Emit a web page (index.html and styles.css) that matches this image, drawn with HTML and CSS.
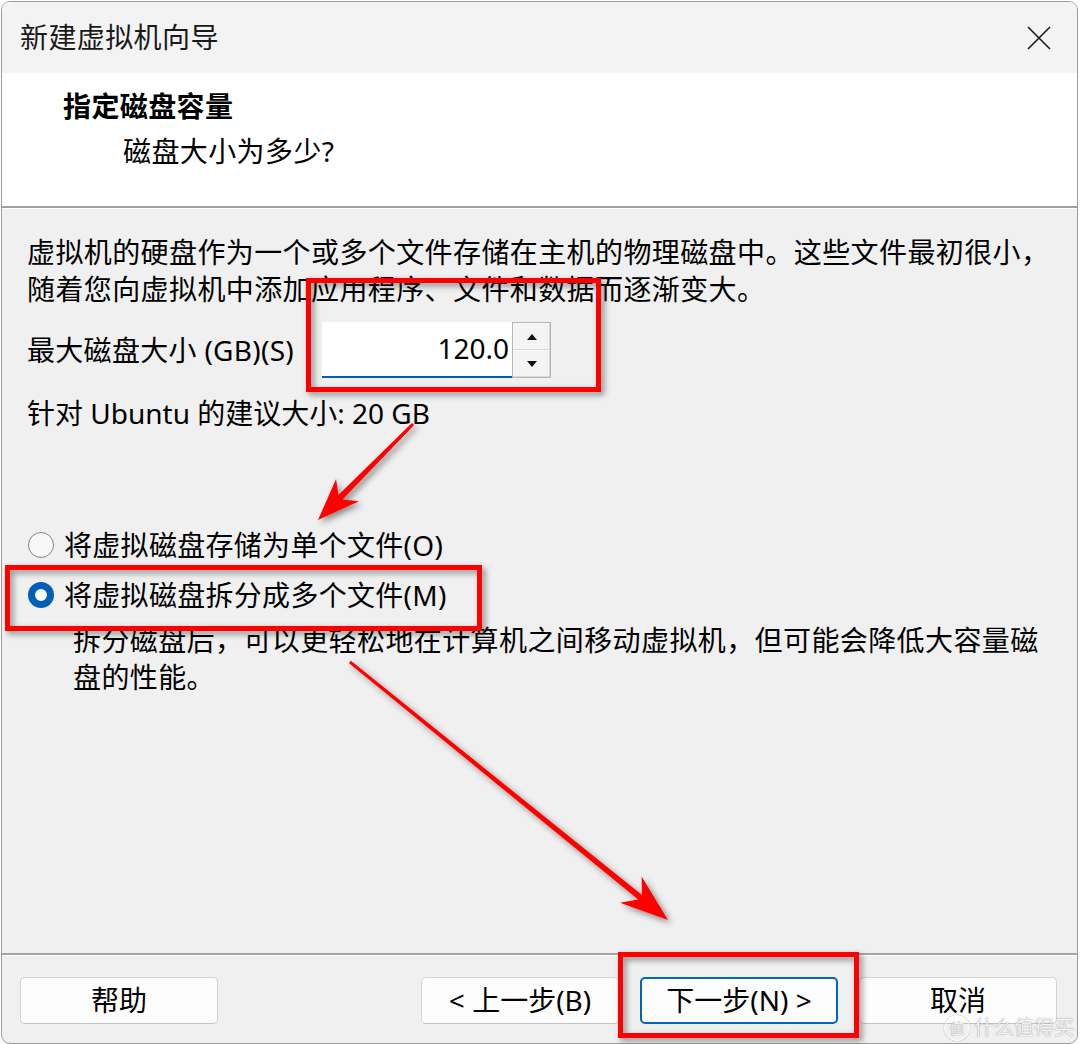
FILE: index.html
```html
<!DOCTYPE html>
<html lang="zh-CN">

<head>
    <meta charset="UTF-8">
    <meta name="viewport" content="width=device-width, initial-scale=1.0">
    <title>新建虚拟机向导</title>
    <link rel="stylesheet" href="styles.css">
</head>

<body>
    <div class="window">
        <div class="titlebar">
            <span class="title">新建虚拟机向导</span>
            <svg class="close" width="24" height="24" viewBox="0 0 24 24">
                <path d="M1 1 L23 23 M23 1 L1 23" stroke="#1a1a1a" stroke-width="1.6" fill="none" />
            </svg>
        </div>

        <div class="header">
            <div class="heading">指定磁盘容量</div>
            <div class="subheading">磁盘大小为多少?</div>
        </div>

        <div class="content">
            <p class="intro">虚拟机的硬盘作为一个或多个文件存储在主机的物理磁盘中。这些文件最初很小，<br>随着您向虚拟机中添加应用程序、文件和数据而逐渐变大。</p>

            <div class="size-row">
                <span class="size-label">最大磁盘大小 (GB)(S)</span>
                <div class="spin">
                    <div class="spin-value">120.0</div>
                    <div class="spin-buttons">
                        <div class="spin-btn"><span class="tri up"></span></div>
                        <div class="spin-btn"><span class="tri down"></span></div>
                    </div>
                </div>
            </div>

            <div class="hint">针对 Ubuntu 的建议大小: 20 GB</div>

            <div class="options">
                <div class="radio"><span class="dot"></span>将虚拟磁盘存储为单个文件(O)</div>
                <div class="radio checked"><span class="dot"></span>将虚拟磁盘拆分成多个文件(M)</div>
                <p class="note">拆分磁盘后，可以更轻松地在计算机之间移动虚拟机，但可能会降低大容量磁<br>盘的性能。</p>
            </div>
        </div>

        <div class="footer">
            <button class="btn">帮助</button>
            <div class="nav">
                <button class="btn">&lt; 上一步(B)</button>
                <button class="btn primary">下一步(N) &gt;</button>
                <button class="btn">取消</button>
            </div>
        </div>
    </div>

    <!-- red callouts drawn over the dialog -->
    <svg class="marks" width="1080" height="1044" viewBox="0 0 1080 1044">
        <defs>
            <filter id="shade" x="-20%" y="-20%" width="140%" height="140%">
                <feDropShadow dx="3" dy="3" stdDeviation="3" flood-color="#000" flood-opacity="0.45" />
            </filter>
        </defs>
        <g filter="url(#shade)" fill="none" stroke="#ff0000" stroke-width="5">
            <rect x="308.5" y="280.5" width="290" height="109" />
            <rect x="7.5" y="567.5" width="472" height="61" />
            <rect x="620.5" y="954.5" width="236" height="81" />
        </g>
        <g filter="url(#shade)" fill="#ff0000">
            <polygon points="414.1,425.1 342.6,499.4 358.9,501.3 318,520 336.1,478.9 338.4,495.1 411.9,422.9" />
            <polygon points="349.1,663.2 638.2,899.5 620,902.8 668,920 641.6,876.4 642,894.9 350.9,660.8" />
        </g>
    </svg>

    <div class="watermark"><span class="badge">值</span>什么值得买</div>
</body>

</html>
```

FILE: styles.css
```css
html,
body {
    margin: 0;
    padding: 0;
    height: 100%;
    background: #fff;
}

body {
    position: relative;
    overflow: hidden;
    font-family: "Noto Sans", "Noto Sans CJK SC", sans-serif;
    font-size: 28px;
    color: #000;
}

.window {
    box-sizing: border-box;
    height: 1043px;
    margin: 1px 2px 0 1px;
    border: 1px solid #9c9c9c;
    border-radius: 9px;
    background: #f0f0f0;
    display: flex;
    flex-direction: column;
    overflow: hidden;
}

/* title bar */
.titlebar {
    height: 71px;
    flex-shrink: 0;
    display: flex;
    align-items: center;
    justify-content: space-between;
    padding: 0 26px 0 18px;
    background: #f3f3f3;
}

.title {
    color: #1a1a1a;
    line-height: 37px;
    letter-spacing: 0.4px;
}

.close {
    display: block;
}

/* white header panel */
.header {
    height: 135px;
    flex-shrink: 0;
    box-sizing: border-box;
    padding: 15px 0 0 61px;
    background: #fff;
    border-bottom: 2px solid #a0a0a0;
}

.heading {
    font-weight: 700;
    line-height: 37px;
    letter-spacing: 0.4px;
}

.subheading {
    margin-top: 8px;
    padding-left: 60px;
    line-height: 37px;
    letter-spacing: 0.4px;
}

/* body of the page */
.content {
    flex: 1;
    border-top: 1px solid #fff;
    padding: 0 20px 0 25px;
}

.intro {
    margin: 25px 0 0;
    line-height: 37px;
    letter-spacing: 0.4px;
    white-space: nowrap;
}

.size-row {
    display: flex;
    align-items: center;
    margin-top: 14px;
    height: 56px;
}

.size-label {
    line-height: 37px;
    letter-spacing: 0.3px;
}

.spin {
    display: flex;
    margin-left: 28px;
    height: 56px;
}

.spin-value {
    box-sizing: border-box;
    width: 190px;
    height: 56px;
    padding-right: 3px;
    text-align: right;
    line-height: 52px;
    background: #fff;
    border-bottom: 2px solid #005fb8;
}

.spin-buttons {
    box-sizing: border-box;
    width: 39px;
    height: 56px;
    border: 1px solid #b4b4b4;
    display: flex;
    flex-direction: column;
    background: #ececec;
}

.spin-btn {
    flex: 1;
    display: flex;
    align-items: center;
    justify-content: center;
    border: 1px solid #fafafa;
    border-right-color: #d9d9d9;
    border-bottom-color: #d9d9d9;
    background: #f4f4f4;
}

.tri {
    width: 0;
    height: 0;
    border-left: 5px solid transparent;
    border-right: 5px solid transparent;
}

.tri.up {
    border-bottom: 6px solid #111;
}

.tri.down {
    border-top: 6px solid #111;
}

.hint {
    margin-top: 17px;
    line-height: 37px;
}

/* radio choices */
.options {
    margin-top: 88px;
}

.radio {
    display: flex;
    align-items: center;
    height: 50px;
    line-height: 37px;
    letter-spacing: 0.3px;
}

.dot {
    box-sizing: border-box;
    width: 26px;
    height: 26px;
    margin: 0 10px 0 1px;
    border-radius: 50%;
    border: 1.5px solid #858585;
    background: #f8f8f8;
}

.radio.checked .dot {
    border: 7px solid #005fb8;
    background: #fff;
}

.note {
    margin: 2px 0 0;
    padding-left: 46px;
    line-height: 37px;
    letter-spacing: 0.4px;
    white-space: nowrap;
}

/* button strip */
.footer {
    height: 90px;
    flex-shrink: 0;
    box-sizing: border-box;
    display: flex;
    align-items: flex-start;
    padding: 22px 20px 0 18px;
    border-top: 2px solid #a5a5a5;
    box-shadow: inset 0 1px 0 #fff;
}

.nav {
    margin-left: auto;
    display: flex;
    gap: 21px;
}

.btn {
    box-sizing: border-box;
    width: 198px;
    height: 47px;
    padding: 0;
    font: inherit;
    line-height: 43px;
    color: #000;
    background: #fdfdfd;
    border: 1px solid #d3d3d3;
    border-bottom-color: #c2c2c2;
    border-radius: 5px;
}

.btn.primary {
    border: 2px solid #0067c0;
}

.marks {
    position: absolute;
    top: 0;
    left: 0;
    pointer-events: none;
}

.watermark {
    position: absolute;
    right: 6px;
    bottom: 3px;
    display: flex;
    align-items: center;
    gap: 4px;
    font-size: 20px;
    line-height: 26px;
    color: rgba(255, 255, 255, 0.92);
    text-shadow: 0 0 1px rgba(0, 0, 0, 0.55);
}

.badge {
    width: 24px;
    height: 24px;
    border-radius: 50%;
    border: 1.5px solid rgba(255, 255, 255, 0.92);
    box-shadow: 0 0 1px rgba(0, 0, 0, 0.55);
    font-size: 15px;
    line-height: 24px;
    text-align: center;
}
```
